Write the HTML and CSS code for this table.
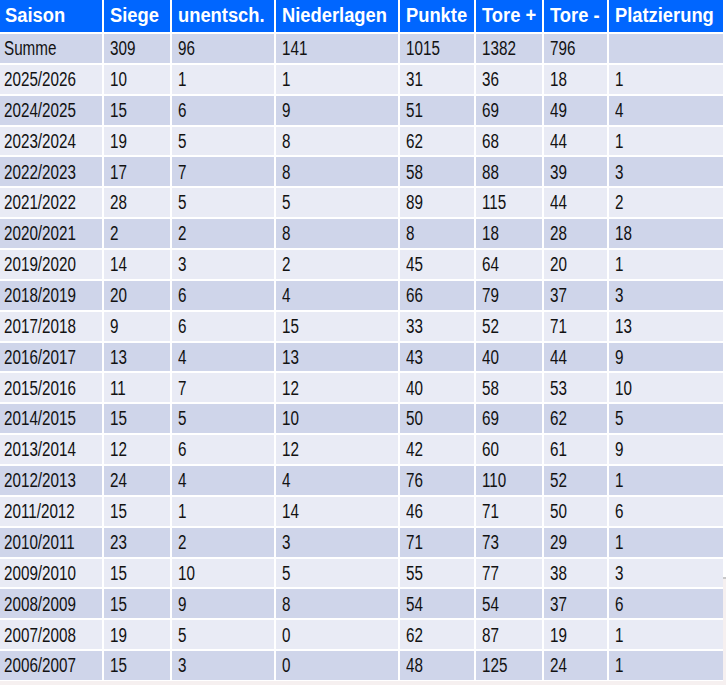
FILE: index.html
```html
<!DOCTYPE html>
<html lang="de">
<head>
<meta charset="utf-8">
<title>Saisonbilanz</title>
<link rel="stylesheet" href="styles.css">
</head>
<body>
<div class="page">
<div class="stats" role="table">
<div class="row head" role="row"><div class="cell" role="columnheader"><span>Saison</span></div><div class="cell" role="columnheader"><span>Siege</span></div><div class="cell" role="columnheader"><span>unentsch.</span></div><div class="cell" role="columnheader"><span>Niederlagen</span></div><div class="cell" role="columnheader"><span>Punkte</span></div><div class="cell" role="columnheader"><span>Tore +</span></div><div class="cell" role="columnheader"><span>Tore -</span></div><div class="cell" role="columnheader"><span>Platzierung</span></div></div>
<div class="row dark" role="row"><div class="cell"><span>Summe</span></div><div class="cell"><span>309</span></div><div class="cell"><span>96</span></div><div class="cell"><span>141</span></div><div class="cell"><span>1015</span></div><div class="cell"><span>1382</span></div><div class="cell"><span>796</span></div><div class="cell"><span></span></div></div>
<div class="row" role="row"><div class="cell"><span>2025/2026</span></div><div class="cell"><span>10</span></div><div class="cell"><span>1</span></div><div class="cell"><span>1</span></div><div class="cell"><span>31</span></div><div class="cell"><span>36</span></div><div class="cell"><span>18</span></div><div class="cell"><span>1</span></div></div>
<div class="row dark" role="row"><div class="cell"><span>2024/2025</span></div><div class="cell"><span>15</span></div><div class="cell"><span>6</span></div><div class="cell"><span>9</span></div><div class="cell"><span>51</span></div><div class="cell"><span>69</span></div><div class="cell"><span>49</span></div><div class="cell"><span>4</span></div></div>
<div class="row" role="row"><div class="cell"><span>2023/2024</span></div><div class="cell"><span>19</span></div><div class="cell"><span>5</span></div><div class="cell"><span>8</span></div><div class="cell"><span>62</span></div><div class="cell"><span>68</span></div><div class="cell"><span>44</span></div><div class="cell"><span>1</span></div></div>
<div class="row dark" role="row"><div class="cell"><span>2022/2023</span></div><div class="cell"><span>17</span></div><div class="cell"><span>7</span></div><div class="cell"><span>8</span></div><div class="cell"><span>58</span></div><div class="cell"><span>88</span></div><div class="cell"><span>39</span></div><div class="cell"><span>3</span></div></div>
<div class="row" role="row"><div class="cell"><span>2021/2022</span></div><div class="cell"><span>28</span></div><div class="cell"><span>5</span></div><div class="cell"><span>5</span></div><div class="cell"><span>89</span></div><div class="cell"><span>115</span></div><div class="cell"><span>44</span></div><div class="cell"><span>2</span></div></div>
<div class="row dark" role="row"><div class="cell"><span>2020/2021</span></div><div class="cell"><span>2</span></div><div class="cell"><span>2</span></div><div class="cell"><span>8</span></div><div class="cell"><span>8</span></div><div class="cell"><span>18</span></div><div class="cell"><span>28</span></div><div class="cell"><span>18</span></div></div>
<div class="row" role="row"><div class="cell"><span>2019/2020</span></div><div class="cell"><span>14</span></div><div class="cell"><span>3</span></div><div class="cell"><span>2</span></div><div class="cell"><span>45</span></div><div class="cell"><span>64</span></div><div class="cell"><span>20</span></div><div class="cell"><span>1</span></div></div>
<div class="row dark" role="row"><div class="cell"><span>2018/2019</span></div><div class="cell"><span>20</span></div><div class="cell"><span>6</span></div><div class="cell"><span>4</span></div><div class="cell"><span>66</span></div><div class="cell"><span>79</span></div><div class="cell"><span>37</span></div><div class="cell"><span>3</span></div></div>
<div class="row" role="row"><div class="cell"><span>2017/2018</span></div><div class="cell"><span>9</span></div><div class="cell"><span>6</span></div><div class="cell"><span>15</span></div><div class="cell"><span>33</span></div><div class="cell"><span>52</span></div><div class="cell"><span>71</span></div><div class="cell"><span>13</span></div></div>
<div class="row dark" role="row"><div class="cell"><span>2016/2017</span></div><div class="cell"><span>13</span></div><div class="cell"><span>4</span></div><div class="cell"><span>13</span></div><div class="cell"><span>43</span></div><div class="cell"><span>40</span></div><div class="cell"><span>44</span></div><div class="cell"><span>9</span></div></div>
<div class="row" role="row"><div class="cell"><span>2015/2016</span></div><div class="cell"><span>11</span></div><div class="cell"><span>7</span></div><div class="cell"><span>12</span></div><div class="cell"><span>40</span></div><div class="cell"><span>58</span></div><div class="cell"><span>53</span></div><div class="cell"><span>10</span></div></div>
<div class="row dark" role="row"><div class="cell"><span>2014/2015</span></div><div class="cell"><span>15</span></div><div class="cell"><span>5</span></div><div class="cell"><span>10</span></div><div class="cell"><span>50</span></div><div class="cell"><span>69</span></div><div class="cell"><span>62</span></div><div class="cell"><span>5</span></div></div>
<div class="row" role="row"><div class="cell"><span>2013/2014</span></div><div class="cell"><span>12</span></div><div class="cell"><span>6</span></div><div class="cell"><span>12</span></div><div class="cell"><span>42</span></div><div class="cell"><span>60</span></div><div class="cell"><span>61</span></div><div class="cell"><span>9</span></div></div>
<div class="row dark" role="row"><div class="cell"><span>2012/2013</span></div><div class="cell"><span>24</span></div><div class="cell"><span>4</span></div><div class="cell"><span>4</span></div><div class="cell"><span>76</span></div><div class="cell"><span>110</span></div><div class="cell"><span>52</span></div><div class="cell"><span>1</span></div></div>
<div class="row" role="row"><div class="cell"><span>2011/2012</span></div><div class="cell"><span>15</span></div><div class="cell"><span>1</span></div><div class="cell"><span>14</span></div><div class="cell"><span>46</span></div><div class="cell"><span>71</span></div><div class="cell"><span>50</span></div><div class="cell"><span>6</span></div></div>
<div class="row dark" role="row"><div class="cell"><span>2010/2011</span></div><div class="cell"><span>23</span></div><div class="cell"><span>2</span></div><div class="cell"><span>3</span></div><div class="cell"><span>71</span></div><div class="cell"><span>73</span></div><div class="cell"><span>29</span></div><div class="cell"><span>1</span></div></div>
<div class="row" role="row"><div class="cell"><span>2009/2010</span></div><div class="cell"><span>15</span></div><div class="cell"><span>10</span></div><div class="cell"><span>5</span></div><div class="cell"><span>55</span></div><div class="cell"><span>77</span></div><div class="cell"><span>38</span></div><div class="cell"><span>3</span></div></div>
<div class="row dark" role="row"><div class="cell"><span>2008/2009</span></div><div class="cell"><span>15</span></div><div class="cell"><span>9</span></div><div class="cell"><span>8</span></div><div class="cell"><span>54</span></div><div class="cell"><span>54</span></div><div class="cell"><span>37</span></div><div class="cell"><span>6</span></div></div>
<div class="row" role="row"><div class="cell"><span>2007/2008</span></div><div class="cell"><span>19</span></div><div class="cell"><span>5</span></div><div class="cell"><span>0</span></div><div class="cell"><span>62</span></div><div class="cell"><span>87</span></div><div class="cell"><span>19</span></div><div class="cell"><span>1</span></div></div>
<div class="row dark" role="row"><div class="cell"><span>2006/2007</span></div><div class="cell"><span>15</span></div><div class="cell"><span>3</span></div><div class="cell"><span>0</span></div><div class="cell"><span>48</span></div><div class="cell"><span>125</span></div><div class="cell"><span>24</span></div><div class="cell"><span>1</span></div></div>
</div>
<div class="edge"><div class="edge-top"></div><div class="edge-mark"></div></div>
</div>
</body>
</html>
```
FILE: styles.css
```css
html, body {
  margin: 0;
  padding: 0;
  background: #f6f0f0;
}
.page {
  display: flex;
  align-items: flex-start;
  width: 726px;
  height: 685px;
  overflow: hidden;
}
.stats {
  flex: none;
  width: 723px;
  display: grid;
  grid-template-columns: 102px 66px 102px 122px 74px 66px 63px 114px;
  grid-template-rows: 32px repeat(21, 28.86px);
  gap: 2px;
  background: #ffffff;
  padding-bottom: 1px;
  font-family: "Liberation Sans", Arial, sans-serif;
}
.row {
  display: contents;
}
.cell {
  display: flex;
  align-items: center;
  padding-left: 6px;
  overflow: hidden;
  white-space: nowrap;
  background: #e9ebf5;
  color: #121212;
}
.cell:first-child {
  padding-left: 4px;
}
.cell span {
  display: inline-block;
  font-size: 19.5px;
  line-height: 1;
  padding-top: 1px;
  transform: scaleX(0.78);
  transform-origin: left center;
}
.dark .cell {
  background: #cfd5ea;
}
.head .cell {
  background: #0066ff;
  color: #ffffff;
  padding-left: 6px;
}
.head .cell:first-child {
  padding-left: 5px;
}
.head .cell span {
  font-weight: bold;
  font-size: 19.5px;
  padding-top: 0;
  transform: scaleX(0.94);
}
.edge {
  flex: none;
  width: 3px;
  display: flex;
  flex-direction: column;
}
.edge-top {
  height: 577px;
  background: #ffffff;
}
.edge-mark {
  height: 2px;
  background: #c8c8c8;
}
```
